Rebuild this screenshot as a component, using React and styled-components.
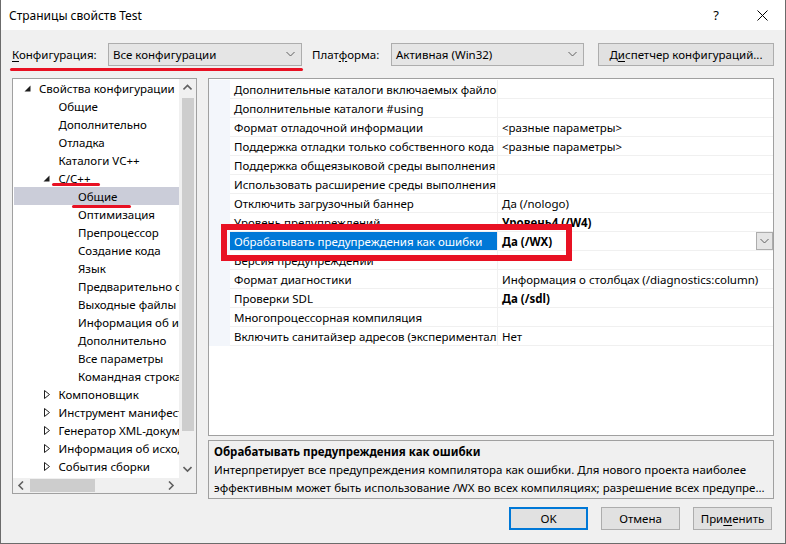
import React from 'react';
import styled, { createGlobalStyle } from 'styled-components';

const GlobalStyle = createGlobalStyle`
  html, body { margin: 0; padding: 0; background: #f0f0f0; }
  body {
    font-family: "Noto Sans", "Segoe UI", sans-serif;
    font-size: 11.5px;
    color: #000;
  }
  * { box-sizing: border-box; }
`;

const Window = styled.div`
  position: relative;
  width: 786px;
  height: 544px;
  background: #f0f0f0;
  border: 1px solid #6b6b6b;
  border-top: none;
  display: flex;
  flex-direction: column;
  overflow: hidden;
`;

const TitleBar = styled.div`
  height: 30px;
  flex: none;
  background: #fff;
  display: flex;
  align-items: center;
  padding-left: 8px;
  font-size: 12px;
`;

const Title = styled.span`
  flex: 1;
`;

const CaptionButton = styled.div`
  width: 46px;
  height: 30px;
  display: flex;
  align-items: center;
  justify-content: center;
  font-size: 13px;
`;

const ConfigRow = styled.div`
  margin-top: 13px;
  height: 23px;
  padding: 0 11px;
  display: flex;
  align-items: center;
  flex: none;
`;

const Label = styled.span`
  width: ${p => p.$w}px;
  flex: none;
  margin-left: ${p => p.$ml || 0}px;
  white-space: nowrap;
`;

const Key = styled.span`
  text-decoration: underline;
  text-underline-offset: 2px;
`;

const Combo = styled.div`
  width: ${p => p.$w}px;
  flex: none;
  height: 23px;
  border: 1px solid #adadad;
  background: #e5e5e5;
  display: flex;
  align-items: center;
  padding: 0 6px 0 4px;
  justify-content: space-between;
`;

const Button = styled.div`
  height: 23px;
  width: ${p => p.$w}px;
  flex: none;
  margin-left: ${p => p.$ml || 0}px;
  border: ${p => (p.$default ? '2px solid #0078d7' : '1px solid #adadad')};
  background: #e1e1e1;
  display: flex;
  align-items: center;
  justify-content: center;
  white-space: nowrap;
`;

const Main = styled.div`
  margin-top: 12px;
  height: 421px;
  padding: 0 11px;
  display: flex;
  gap: 11px;
  flex: none;
`;

const TreePanel = styled.div`
  width: 185px;
  flex: none;
  height: 416px;
  border: 1px solid #a0a0a0;
  background: #fff;
  display: grid;
  grid-template-columns: minmax(0, 1fr) 17px;
  grid-template-rows: minmax(0, 1fr) 15px;
`;

const TreeList = styled.div`
  overflow: hidden;
  padding: 0 0 0 1px;
`;

const TreeRow = styled.div`
  height: 18px;
  display: flex;
  align-items: center;
  white-space: nowrap;
  padding-left: ${p => 1 + p.$depth * 19.5}px;
  background: ${p => (p.$selected ? '#cbcdd9' : 'transparent')};
`;

const Expander = styled.span`
  width: 24px;
  flex: none;
  display: flex;
  justify-content: center;
  align-items: center;
`;

const ScrollV = styled.div`
  background: #f0f0f0;
  display: flex;
  flex-direction: column;
  align-items: center;
`;

const ScrollArrow = styled.div`
  width: ${p => (p.$h ? '17px' : '100%')};
  height: ${p => (p.$h ? '100%' : '17px')};
  display: flex;
  align-items: center;
  justify-content: center;
  flex: none;
`;

const ThumbV = styled.div`
  width: 12px;
  height: 333px;
  margin-top: 2px;
  background: #cdcdcd;
`;

const ScrollH = styled.div`
  background: #f0f0f0;
  display: flex;
  align-items: center;
`;

const ThumbH = styled.div`
  height: 13px;
  width: 65px;
  background: #cdcdcd;
`;

const Filler = styled.div`
  flex: 1;
`;

const Corner = styled.div`
  background: #f0f0f0;
`;

const RightCol = styled.div`
  flex: 1;
  min-width: 0;
  display: flex;
  flex-direction: column;
  gap: 4px;
`;

const Grid = styled.div`
  height: 358px;
  border: 1px solid #a0a0a0;
  background: #fff;
  padding-top: 1px;
`;

const PropRow = styled.div`
  display: grid;
  grid-template-columns: 21px 268px minmax(0, 1fr);
  height: 19px;
`;

const Margin = styled.div`
  background: #f3f6fb;
`;

const NameCell = styled.div`
  border-bottom: 1px solid #f0f0f0;
  border-right: 1px solid #f0f0f0;
  padding-left: 4px;
  display: flex;
  align-items: center;
  white-space: nowrap;
  overflow: hidden;
  background: ${p => (p.$selected ? '#0078d7' : 'transparent')};
  color: ${p => (p.$selected ? '#fff' : '#000')};
`;

const ValueCell = styled.div`
  border-bottom: 1px solid #f0f0f0;
  padding-left: 4px;
  display: flex;
  align-items: center;
  justify-content: space-between;
  white-space: nowrap;
  overflow: hidden;
  font-weight: ${p => (p.$bold ? 700 : 400)};
`;

const CellDrop = styled.div`
  width: 17px;
  height: 18px;
  border: 1px solid #adadad;
  background: #e5e5e5;
  display: flex;
  align-items: center;
  justify-content: center;
`;

const Description = styled.div`
  height: 59px;
  border: 1px solid #a0a0a0;
  padding: 2px 5px 0;
  line-height: 18px;
  white-space: nowrap;
  overflow: hidden;
`;

const DescTitle = styled.div`
  font-weight: 700;
`;

const Footer = styled.div`
  margin-top: 8px;
  padding-right: 13px;
  display: flex;
  justify-content: flex-end;
  gap: 13px;
`;

const Mark = styled.div`
  position: absolute;
  left: ${p => p.$x}px;
  top: ${p => p.$y}px;
  width: ${p => p.$w}px;
  height: 3px;
  border-radius: 2px;
  background: #e81123;
`;

const MarkBox = styled.div`
  position: absolute;
  left: 220px;
  top: 224px;
  width: 351px;
  height: 37px;
  border: 6px solid #e81123;
`;

const Chevron = ({ dir = 'down', color = '#606060', size = 9, w = 1 }) => {
  const pts = {
    down: '0.5,2 4.5,6 8.5,2',
    up: '0.5,6.5 4.5,2.5 8.5,6.5',
    left: '6,0.5 2,4.5 6,8.5',
    right: '3,0.5 7,4.5 3,8.5',
  }[dir];
  return (
    <svg width={size} height={size} viewBox="0 0 9 9">
      <polyline points={pts} fill="none" stroke={color} strokeWidth={w} />
    </svg>
  );
};

const ExpandIcon = ({ open }) =>
  open ? (
    <svg width="7" height="7" viewBox="0 0 7 7">
      <polygon points="6.5,0.5 6.5,6.5 0.5,6.5" fill="#1e1e1e" />
    </svg>
  ) : (
    <svg width="6" height="9" viewBox="0 0 6 9">
      <polygon points="0.5,0.5 5.5,4.5 0.5,8.5" fill="none" stroke="#1e1e1e" strokeWidth="1" />
    </svg>
  );

const treeItems = [
  { label: 'Свойства конфигурации', depth: 0, exp: 'open' },
  { label: 'Общие', depth: 1 },
  { label: 'Дополнительно', depth: 1 },
  { label: 'Отладка', depth: 1 },
  { label: 'Каталоги VC++', depth: 1 },
  { label: 'C/C++', depth: 1, exp: 'open' },
  { label: 'Общие', depth: 2, selected: true },
  { label: 'Оптимизация', depth: 2 },
  { label: 'Препроцессор', depth: 2 },
  { label: 'Создание кода', depth: 2 },
  { label: 'Язык', depth: 2 },
  { label: 'Предварительно откомпилированные заголовки', depth: 2 },
  { label: 'Выходные файлы', depth: 2 },
  { label: 'Информация об исходных файлах', depth: 2 },
  { label: 'Дополнительно', depth: 2 },
  { label: 'Все параметры', depth: 2 },
  { label: 'Командная строка', depth: 2 },
  { label: 'Компоновщик', depth: 1, exp: 'closed' },
  { label: 'Инструмент манифеста', depth: 1, exp: 'closed' },
  { label: 'Генератор XML-документов', depth: 1, exp: 'closed' },
  { label: 'Информация об исходном коде', depth: 1, exp: 'closed' },
  { label: 'События сборки', depth: 1, exp: 'closed' },
];

const props = [
  { name: 'Дополнительные каталоги включаемых файлов', value: '' },
  { name: 'Дополнительные каталоги #using', value: '' },
  { name: 'Формат отладочной информации', value: '<разные параметры>' },
  { name: 'Поддержка отладки только собственного кода', value: '<разные параметры>' },
  { name: 'Поддержка общеязыковой среды выполнения (CLR)', value: '' },
  { name: 'Использовать расширение среды выполнения Windows', value: '' },
  { name: 'Отключить загрузочный баннер', value: 'Да (/nologo)' },
  { name: 'Уровень предупреждений', value: 'Уровень4 (/W4)', bold: true },
  { name: 'Обрабатывать предупреждения как ошибки', value: 'Да (/WX)', bold: true, selected: true },
  { name: 'Версия предупреждений', value: '' },
  { name: 'Формат диагностики', value: 'Информация о столбцах (/diagnostics:column)' },
  { name: 'Проверки SDL', value: 'Да (/sdl)', bold: true },
  { name: 'Многопроцессорная компиляция', value: '' },
  { name: 'Включить санитайзер адресов (экспериментальная функция)', value: 'Нет' },
];

export default function App() {
  return (
    <>
      <GlobalStyle />
      <Window>
        <TitleBar>
          <Title>Страницы свойств Test</Title>
          <CaptionButton>?</CaptionButton>
          <CaptionButton>
            <svg width="11" height="11" viewBox="0 0 11 11">
              <path d="M0.5 0.5 L10.5 10.5 M10.5 0.5 L0.5 10.5" stroke="#000" strokeWidth="1" />
            </svg>
          </CaptionButton>
        </TitleBar>

        <ConfigRow>
          <Label $w={96}><Key>К</Key>онфигурация:</Label>
          <Combo $w={194}>
            <span>Все конфигурации</span>
            <Chevron />
          </Combo>
          <Label $w={79} $ml={10}>Плат<Key>ф</Key>орма:</Label>
          <Combo $w={193}>
            <span>Активная (Win32)</span>
            <Chevron />
          </Combo>
          <Button $w={176} $ml={14}>Д<Key>и</Key>спетчер конфигураций...</Button>
        </ConfigRow>

        <Main>
          <TreePanel>
            <TreeList>
              {treeItems.map((item, i) => (
                <TreeRow key={i} $depth={item.depth} $selected={item.selected}>
                  <Expander>{item.exp && <ExpandIcon open={item.exp === 'open'} />}</Expander>
                  {item.label}
                </TreeRow>
              ))}
            </TreeList>
            <ScrollV>
              <ScrollArrow><Chevron dir="up" w={1.6} /></ScrollArrow>
              <ThumbV />
              <Filler />
              <ScrollArrow><Chevron dir="down" w={1.6} /></ScrollArrow>
            </ScrollV>
            <ScrollH>
              <ScrollArrow $h><Chevron dir="left" w={1.6} /></ScrollArrow>
              <ThumbH />
              <Filler />
              <ScrollArrow $h><Chevron dir="right" w={1.6} /></ScrollArrow>
            </ScrollH>
            <Corner />
          </TreePanel>

          <RightCol>
            <Grid>
              {props.map((p, i) => (
                <PropRow key={i}>
                  <Margin />
                  <NameCell $selected={p.selected}>{p.name}</NameCell>
                  <ValueCell $bold={p.bold}>
                    <span>{p.value}</span>
                    {p.selected && (
                      <CellDrop><Chevron /></CellDrop>
                    )}
                  </ValueCell>
                </PropRow>
              ))}
            </Grid>
            <Description>
              <DescTitle>Обрабатывать предупреждения как ошибки</DescTitle>
              <div>Интерпретирует все предупреждения компилятора как ошибки. Для нового проекта наиболее</div>
              <div>эффективным может быть использование /WX во всех компиляциях; разрешение всех предупре...</div>
            </Description>
          </RightCol>
        </Main>

        <Footer>
          <Button $w={79} $default>OK</Button>
          <Button $w={79}>Отмена</Button>
          <Button $w={79}>При<Key>м</Key>енить</Button>
        </Footer>

        <Mark $x={9} $y={68} $w={293} />
        <Mark $x={51} $y={183} $w={48} />
        <Mark $x={71} $y={205} $w={59} />
        <MarkBox />
      </Window>
    </>
  );
}
